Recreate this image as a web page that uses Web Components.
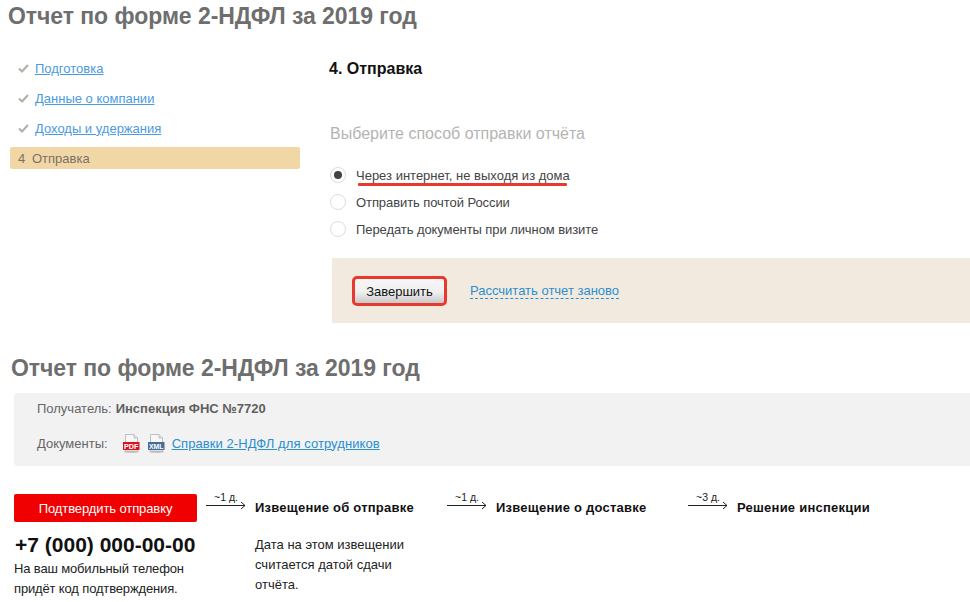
<!DOCTYPE html>
<html lang="ru">
<head>
<meta charset="utf-8">
<title>Отчет 2-НДФЛ</title>
<style>
    html, body {
        margin: 0;
        padding: 0;
        background: #fff;
        font-family: "Liberation Sans", Arial, sans-serif;
        font-size: 13px;
        color: #333;
    }
    body {
        width: 970px;
        height: 602px;
        overflow: hidden;
    }
</style>
</head>
<body>
<report-title style="margin-left: 8px; padding-top: 3px">Отчет по форме 2-НДФЛ за 2019 год</report-title>

<wizard-layout>
    <step-list slot="side">
        <step-item href="#">Подготовка</step-item>
        <step-item href="#">Данные о компании</step-item>
        <step-item href="#">Доходы и удержания</step-item>
        <step-item current num="4">Отправка</step-item>
    </step-list>
    <send-form>
        <radio-option checked marked>Через интернет, не выходя из дома</radio-option>
        <radio-option style="letter-spacing: -0.08px">Отправить почтой России</radio-option>
        <radio-option style="letter-spacing: -0.08px">Передать документы при личном визите</radio-option>
    </send-form>
</wizard-layout>

<report-title style="margin: 32px 0 0 11px">Отчет по форме 2-НДФЛ за 2019 год</report-title>
<info-panel></info-panel>
<send-timeline></send-timeline>

<script>
class ReportTitle extends HTMLElement {
    constructor() {
        super()
        const shadow = this.attachShadow({ mode: 'open' })
        shadow.innerHTML = `
        <style>
            :host {
                display: block;
                font-size: 23px;
                letter-spacing: -0.06px;
                font-weight: 700;
                line-height: 26px;
                color: #6e6e6e;
            }
        </style>
        <slot></slot>
        `
    }
}

class WizardLayout extends HTMLElement {
    constructor() {
        super()
        const shadow = this.attachShadow({ mode: 'open' })
        shadow.innerHTML = `
        <style>
            :host {
                display: flex;
                padding: 28px 0 0 10px;
            }
            .side {
                width: 290px;
                margin-right: 30px;
                flex: none;
            }
            .main {
                flex: 1;
            }
        </style>
        <div class="side"><slot name="side"></slot></div>
        <div class="main"><slot></slot></div>
        `
    }
}

class StepList extends HTMLElement {
    constructor() {
        super()
        const shadow = this.attachShadow({ mode: 'open' })
        shadow.innerHTML = `
        <style>
            :host {
                display: flex;
                flex-direction: column;
                gap: 8px;
            }
        </style>
        <slot></slot>
        `
    }
}

class StepItem extends HTMLElement {
    constructor() {
        super()
        const shadow = this.attachShadow({ mode: 'open' })
        const current = this.hasAttribute('current')
        const mark = current
            ? `<span class="num">${this.getAttribute('num')}</span>`
            : `<svg class="num" width="11" height="9" viewBox="0 0 11 9"><path d="M1 4.5 L4 7.5 L10 1" fill="none" stroke="#b3ada5" stroke-width="2"/></svg>`
        const label = current
            ? `<span class="label"><slot></slot></span>`
            : `<a href="${this.getAttribute('href')}"><slot></slot></a>`
        shadow.innerHTML = `
        <style>
            :host {
                display: flex;
                align-items: center;
                height: 22px;
                padding-left: 8px;
                font-size: 13px;
                border-radius: 2px;
            }
            :host([current]) {
                background: #f2d7a6;
                color: #7a7266;
            }
            .num {
                width: 11px;
                margin-right: 6px;
                flex: none;
                margin-top: 1px;
            }
            :host([current]) .num {
                margin-top: 0;
                margin-right: 3px;
            }
            a {
                color: #4a9be0;
                text-decoration: underline;
            }
        </style>
        ${mark}${label}
        `
    }
}

class SendForm extends HTMLElement {
    constructor() {
        super()
        const shadow = this.attachShadow({ mode: 'open' })
        shadow.innerHTML = `
        <style>
            :host {
                display: block;
            }
            h3 {
                margin: 1px 0 0 -1px;
                font-size: 16px;
                line-height: 22px;
                font-weight: 700;
                color: #111;
            }
            h4 {
                margin: 43px 0 0;
                font-size: 16px;
                line-height: 22px;
                font-weight: 400;
                color: #b4b4b4;
            }
            .options {
                display: flex;
                flex-direction: column;
                gap: 7px;
                margin-top: 20px;
            }
            .actions {
                display: flex;
                align-items: center;
                gap: 26px;
                box-sizing: border-box;
                height: 65px;
                margin: 19px 0 0 2px;
                padding: 1px 0 0 23px;
                background: #f3eadf;
            }
            button {
                width: 89px;
                height: 24px;
                padding: 0;
                border: 0;
                border-radius: 2px;
                outline: 3px solid #e8392f;
                outline-offset: 0;
                background: linear-gradient(#f6f6f6, #f0f0f0 55%, #c8c8c8);
                font: 13px "Liberation Sans", Arial, sans-serif;
                color: #111;
            }
            a {
                color: #2a8fd0;
                text-decoration: none;
                border-bottom: 1px dashed #2a8fd0;
                line-height: 15px;
            }
        </style>
        <h3>4. Отправка</h3>
        <h4>Выберите способ отправки отчёта</h4>
        <div class="options"><slot></slot></div>
        <div class="actions">
            <button>Завершить</button>
            <a href="#">Рассчитать отчет заново</a>
        </div>
        `
    }
}

class RadioOption extends HTMLElement {
    constructor() {
        super()
        const shadow = this.attachShadow({ mode: 'open' })
        shadow.innerHTML = `
        <style>
            :host {
                display: flex;
                align-items: center;
                height: 20px;
                font-size: 13px;
                color: #444;
                position: relative;
            }
            .ring {
                box-sizing: border-box;
                width: 16px;
                height: 16px;
                margin-right: 10px;
                display: flex;
                align-items: center;
                justify-content: center;
                border: 1px solid #ddd;
                border-radius: 50%;
                background: #fff;
                flex: none;
            }
            :host([checked]) .ring::after {
                content: "";
                width: 8px;
                height: 8px;
                border-radius: 50%;
                background: #444;
            }
            :host([marked])::after {
                content: "";
                position: absolute;
                left: 28px;
                width: 209px;
                top: 18px;
                height: 3px;
                background: #e8392f;
                border-radius: 1px;
            }
        </style>
        <span class="ring"></span><span><slot></slot></span>
        `
    }
}

class FileIcon extends HTMLElement {
    constructor() {
        super()
        const shadow = this.attachShadow({ mode: 'open' })
        const color = this.getAttribute('color')
        shadow.innerHTML = `
        <style>
            :host {
                display: block;
                width: 17px;
                height: 19px;
            }
            svg {
                display: block;
            }
            text {
                font: 700 7px "Liberation Sans", Arial, sans-serif;
                fill: #fff;
            }
        </style>
        <svg width="17" height="19" viewBox="0 0 17 19">
            <ellipse cx="8.5" cy="17.8" rx="7.5" ry="1" fill="#bbb"/>
            <path d="M2.5 .5 H11 L14.5 4 V17 H2.5 Z" fill="#f7f7f7" stroke="#c0c0c0"/>
            <path d="M11 .5 V4 H14.5" fill="#ddd" stroke="#c0c0c0"/>
            <rect x="0" y="8" width="16.5" height="8" fill="${color}"/>
            <text x="1" y="14.7" textLength="14.5" lengthAdjust="spacingAndGlyphs"><slot></slot></text>
        </svg>
        `
        shadow.querySelector('text').textContent = this.getAttribute('label')
    }
}

class InfoPanel extends HTMLElement {
    constructor() {
        super()
        const shadow = this.attachShadow({ mode: 'open' })
        shadow.innerHTML = `
        <style>
            :host {
                display: block;
                box-sizing: border-box;
                height: 73px;
                margin: 12px 0 0 14px;
                padding: 7px 0 0 23px;
                background: #f2f2f2;
                border-radius: 3px 0 0 3px;
                font-size: 13px;
                color: #666;
            }
            .row {
                display: flex;
                align-items: center;
                height: 16px;
            }
            .row + .row {
                height: 20px;
                margin-top: 17px;
            }
            b {
                margin-left: 4px;
                color: #5f5f5f;
            }
            .files {
                display: flex;
                gap: 8px;
                margin: 0 7px 0 15px;
            }
            a {
                color: #2a8fd0;
                letter-spacing: 0.07px;
            }
        </style>
        <div class="row">Получатель: <b>Инспекция ФНС №7720</b></div>
        <div class="row">
            Документы:
            <div class="files">
                <file-icon color="#d9121f" label="PDF"></file-icon>
                <file-icon color="#466d99" label="XML"></file-icon>
            </div>
            <a href="#">Справки 2-НДФЛ для сотрудников</a>
        </div>
        `
    }
}

class StageArrow extends HTMLElement {
    constructor() {
        super()
        const shadow = this.attachShadow({ mode: 'open' })
        shadow.innerHTML = `
        <style>
            :host {
                display: block;
                position: relative;
                width: 40px;
                height: 28px;
                flex: none;
            }
            span {
                position: absolute;
                top: -3px;
                left: 8px;
                font-size: 10.5px;
                line-height: 12px;
                color: #222;
                white-space: nowrap;
            }
            svg {
                position: absolute;
                top: 7px;
                left: 0;
            }
        </style>
        <span><slot></slot></span>
        <svg width="40" height="9" viewBox="0 0 40 9"><path d="M0 4.5 H39 M35 1 L39 4.5 L35 8" fill="none" stroke="#222"/></svg>
        `
    }
}

class SendTimeline extends HTMLElement {
    constructor() {
        super()
        const shadow = this.attachShadow({ mode: 'open' })
        shadow.innerHTML = `
        <style>
            :host {
                display: flex;
                margin: 28px 0 0 14px;
                color: #222;
                font-size: 13px;
            }
            .first {
                width: 183px;
                flex: none;
                margin-right: 9px;
            }
            .confirm {
                display: block;
                width: 183px;
                height: 28px;
                padding: 0;
                border: 0;
                border-radius: 2px;
                background: #f00000;
                color: #fff;
                font: 13px "Liberation Sans", Arial, sans-serif;
                letter-spacing: -0.1px;
            }
            .phone {
                margin: 11px 0 0 1px;
                font-size: 21px;
                line-height: 24px;
                font-weight: 700;
                color: #111;
                white-space: nowrap;
            }
            p {
                margin: 0;
                line-height: 20px;
                white-space: nowrap;
            }
            .first p {
                margin-top: 2px;
                letter-spacing: -0.15px;
            }
            .stage {
                flex: none;
                margin-left: 9px;
            }
            .stage b {
                display: block;
                font-size: 13px;
                letter-spacing: 0.23px;
                line-height: 28px;
                color: #111;
                white-space: nowrap;
            }
            .stage p {
                margin-top: 13px;
            }
            .one { width: 183px; margin-right: 9px; }
            .two { width: 192px; margin-left: 9px; }
        </style>
        <div class="first">
            <button class="confirm">Подтвердить отправку</button>
            <div class="phone">+7 (000) 000-00-00</div>
            <p>На ваш мобильный телефон<br>придёт код подтверждения.</p>
        </div>
        <stage-arrow>~1 д.</stage-arrow>
        <div class="stage one">
            <b>Извещение об отправке</b>
            <p>Дата на этом извещении<br>считается датой сдачи<br>отчёта.</p>
        </div>
        <stage-arrow>~1 д.</stage-arrow>
        <div class="stage two">
            <b>Извещение о доставке</b>
        </div>
        <stage-arrow>~3 д.</stage-arrow>
        <div class="stage"><b>Решение инспекции</b></div>
        `
    }
}

customElements.define("report-title", ReportTitle)
customElements.define("wizard-layout", WizardLayout)
customElements.define("step-list", StepList)
customElements.define("step-item", StepItem)
customElements.define("send-form", SendForm)
customElements.define("radio-option", RadioOption)
customElements.define("file-icon", FileIcon)
customElements.define("info-panel", InfoPanel)
customElements.define("stage-arrow", StageArrow)
customElements.define("send-timeline", SendTimeline)
</script>
</body>
</html>
